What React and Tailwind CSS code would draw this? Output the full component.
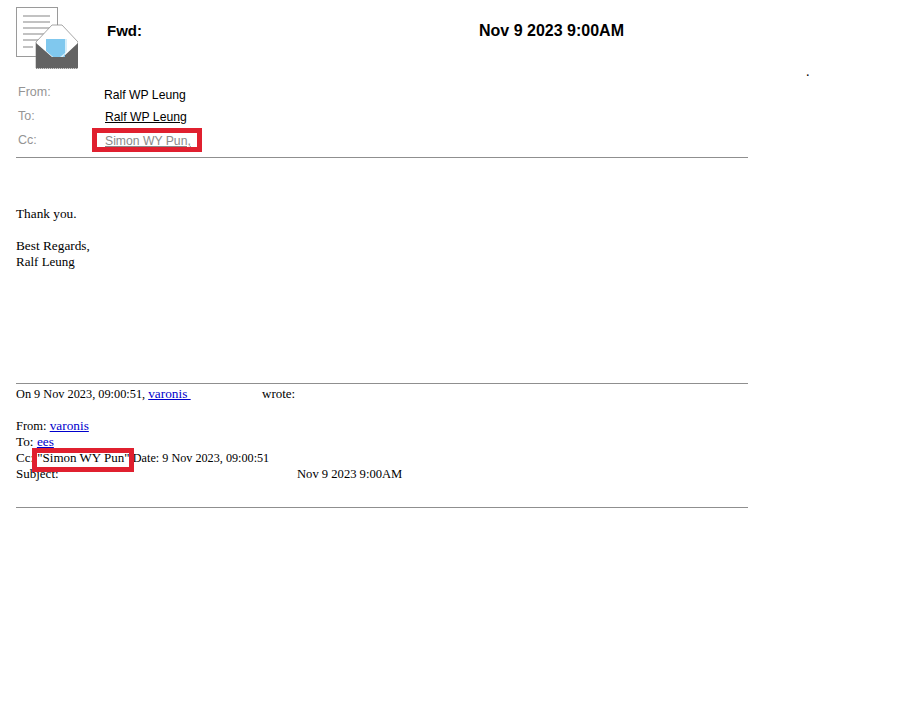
const sans = "font-['Liberation_Sans',Arial,sans-serif]";

function MailIcon() {
  return (
    <svg width="62" height="62" viewBox="0 0 62 62" className="shrink-0">
      <rect x="0.5" y="0.5" width="41" height="49" fill="#fff" stroke="#9a9a9a" />
      <g stroke="#c2c2c2" strokeWidth="2">
        <path d="M7 9h27M7 15h27M7 21h27M7 27h27M7 33h17M7 40h10" />
      </g>
      <path d="M20 35 L36 18 H46 L62 35 V61 H20 Z" fill="#fff" stroke="#8a8a8a" strokeWidth="0.75" />
      <path d="M20 36 L36 50 H47 L62 36 V61 H20 Z" fill="#636363" />
      <path d="M20 61.5 H62" stroke="#8a8a8a" strokeDasharray="1 1" />
      <path d="M30 32 H49 V50 H37 L30 44 Z" fill="#80c8ee" />
      <path d="M49 32 H51 V44 L47 50 H44 L49 46 Z" fill="#d6eefa" />
    </svg>
  );
}

function HeaderRow({ label, children, nameClass = "mt-px" }) {
  return (
    <div className="flex h-6 items-start leading-4">
      <span className="w-[86px] pl-[2px] text-[12.5px] text-[#949494]">{label}</span>
      <span className={`text-[12.2px] ${nameClass}`}>{children}</span>
    </div>
  );
}

function Link({ children }) {
  return <span className="text-[13.3px] text-[#0000cc] underline">{children}</span>;
}

export default function App() {
  return (
    <div className="relative min-h-[711px] w-[911px] bg-white text-black">
      <span className="absolute left-[806px] top-[61px] font-['Liberation_Serif',serif] text-[14px]">.</span>
      <div className={`w-[748px] pl-4 pt-[7px] ${sans}`}>
        <div className="flex h-[64px] items-start">
          <MailIcon />
          <b className="ml-[29px] mt-[15px] w-[372px] text-[15px] leading-[18px]">Fwd:</b>
          <b className="mt-[15px] text-[16px] leading-[18px]">Nov 9 2023 9:00AM</b>
        </div>
        <div className="mt-[13px]">
          <HeaderRow label="From:" nameClass="ml-[2px] mt-[3px]">Ralf WP Leung</HeaderRow>
          <HeaderRow label="To:" nameClass="ml-[3px] mt-px underline">Ralf WP Leung</HeaderRow>
          <HeaderRow label="Cc:" nameClass="ml-[3px] mt-px text-[#8a8a8a] underline">Simon WY Pun,</HeaderRow>
        </div>
        <div className="mt-px border-t border-[#8f8f8f]" />
      </div>

      <div className="w-[748px] pl-4 font-['Liberation_Serif',serif] text-[13.3px] leading-4">
        <p className="mt-[48px]">Thank you.</p>
        <p className="mt-4">Best Regards,</p>
        <p className="text-[13px]">Ralf Leung</p>
        <div className="mt-[113px] border-t border-[#8f8f8f]" />
        <p className="mt-[2px] flex">
          <span className="w-[246px] text-[12.3px]">
            On 9 Nov 2023, 09:00:51, <Link>varonis&nbsp;</Link>
          </span>
          <span className="text-[13px]">wrote:</span>
        </p>
        <p className="mt-4 text-[12.5px]">From: <Link>varonis</Link></p>
        <p>To: <Link>ees</Link></p>
        <p className="text-[13px]">
          Cc: "Simon WY Pun" <span className="text-[12.2px]">Date: 9 Nov 2023, 09:00:51</span>
        </p>
        <p className="flex">
          <span className="w-[281px] text-[13px]">Subject:</span>
          <span className="text-[12.6px]">Nov 9 2023 9:00AM</span>
        </p>
        <div className="mt-[25px] border-t border-[#8f8f8f]" />
      </div>

      <div className="absolute left-[92px] top-[128px] h-6 w-[110px] border-[5px] border-[#e0202f]" />
      <div className="absolute left-[32px] top-[448px] h-6 w-[102px] border-[5px] border-[#e0202f]" />
    </div>
  );
}
